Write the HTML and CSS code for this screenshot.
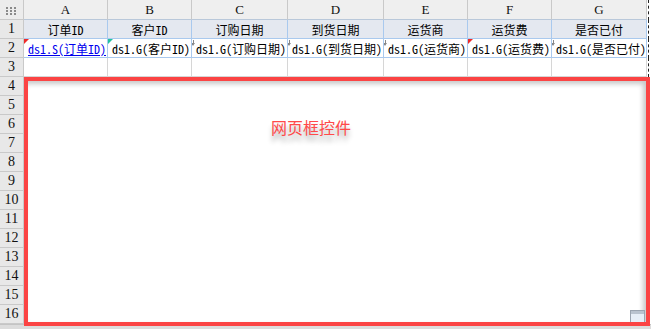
FILE: index.html
```html
<!DOCTYPE html>
<html lang="zh">
<head>
  <meta charset="UTF-8" />
  <title>网页框控件</title>
  <link rel="stylesheet" href="styles.css">
</head>
<body>
  <div class="sheet">
    <!-- 列头 -->
    <div class="corner">
      <svg width="11" height="8" viewBox="0 0 11 8">
        <g fill="#8a8a8a">
          <rect x="0" y="0" width="2" height="2"/><rect x="4" y="0" width="2" height="2"/><rect x="8" y="0" width="2" height="2"/>
          <rect x="0" y="3" width="2" height="2"/><rect x="4" y="3" width="2" height="2"/><rect x="8" y="3" width="2" height="2"/>
          <rect x="0" y="6" width="2" height="2"/><rect x="4" y="6" width="2" height="2"/><rect x="8" y="6" width="2" height="2"/>
        </g>
      </svg>
    </div>
    <div class="col-head">A</div>
    <div class="col-head">B</div>
    <div class="col-head">C</div>
    <div class="col-head">D</div>
    <div class="col-head">E</div>
    <div class="col-head">F</div>
    <div class="col-head">G</div>
    <div class="filler"></div>

    <!-- 第1行 -->
    <div class="row-head">1</div>
    <div class="cell title">订单ID</div>
    <div class="cell title">客户ID</div>
    <div class="cell title">订购日期</div>
    <div class="cell title">到货日期</div>
    <div class="cell title">运货商</div>
    <div class="cell title">运货费</div>
    <div class="cell title">是否已付</div>
    <div class="filler"></div>

    <!-- 第2行 -->
    <div class="row-head">2</div>
    <div class="cell field"><span class="mark red"></span><span class="link">ds1.S(订单ID)</span></div>
    <div class="cell field"><span class="mark green"></span>ds1.G(客户ID)</div>
    <div class="cell field"><span class="arrow"></span>ds1.G(订购日期)</div>
    <div class="cell field"><span class="arrow"></span>ds1.G(到货日期)</div>
    <div class="cell field"><span class="arrow"></span>ds1.G(运货商)</div>
    <div class="cell field"><span class="mark red"></span>ds1.G(运货费)</div>
    <div class="cell field"><span class="arrow"></span>ds1.G(是否已付)</div>
    <div class="filler"></div>

    <!-- 第3行 -->
    <div class="row-head">3</div>
    <div class="cell plain"></div>
    <div class="cell plain"></div>
    <div class="cell plain"></div>
    <div class="cell plain"></div>
    <div class="cell plain"></div>
    <div class="cell plain"></div>
    <div class="cell plain"></div>
    <div class="filler"></div>

    <div class="row-head">4</div>
    <div class="row-head">5</div>
    <div class="row-head">6</div>
    <div class="row-head">7</div>
    <div class="row-head">8</div>
    <div class="row-head">9</div>
    <div class="row-head">10</div>
    <div class="row-head">11</div>
    <div class="row-head">12</div>
    <div class="row-head">13</div>
    <div class="row-head">14</div>
    <div class="row-head">15</div>
    <div class="row-head">16</div>

    <!-- 网页框 -->
    <div class="frame">
      <div class="frame-label">网页框控件</div>
      <div class="frame-icon"></div>
    </div>

    <div class="scrollbar"></div>
  </div>
</body>
</html>
```

FILE: styles.css
```css
:root {
  --head: #ececec;
  --head-line: #c9c9c9;
  --blue-line: #a9c9ee;
  --gray-line: #d6d6d6;
  --title-bg: #e4e8f0;
  --red: #fb4444;
}

body {
  margin: 0;
  background: #fff;
  overflow: hidden;
  font-family: "Noto Sans Mono CJK SC", "Noto Sans CJK SC", monospace;
  font-size: 12px;
  color: #000;
}

.sheet {
  display: grid;
  grid-template-columns: 24px 84px 84px 96px 96px 84px 84px 95px 1fr;
  grid-template-rows: 20px repeat(16, 19px) 20px;
  width: 651px;
  height: 329px;
}

.corner,
.col-head,
.row-head {
  box-sizing: border-box;
  background: var(--head);
  border-right: 1px solid var(--head-line);
  border-bottom: 1px solid var(--head-line);
  display: flex;
  align-items: center;
  justify-content: center;
  font-family: "Liberation Serif", "DejaVu Serif", serif;
  font-size: 13px;
  color: #111;
}

.col-head {
  background: #efefef;
  border-bottom-color: #b9c8da;
}

.row-head {
  grid-column: 1;
  background: #e8e8e8;
  font-size: 14px;
}

.corner svg {
  margin-top: 2px;
}

.filler {
  box-sizing: border-box;
  margin-left: 1px;
  border-left: 1px dashed #222;
}

.cell {
  box-sizing: border-box;
  position: relative;
  border-right: 1px solid var(--blue-line);
  border-bottom: 1px solid var(--blue-line);
  display: flex;
  align-items: center;
  white-space: nowrap;
  overflow: hidden;
}

.title {
  background: var(--title-bg);
  justify-content: center;
}

.field {
  padding-left: 4px;
}

.plain {
  border-right-color: var(--gray-line);
  border-bottom-color: var(--gray-line);
}

.link {
  color: #0000ee;
  text-decoration: underline;
}

.mark {
  position: absolute;
  left: 0;
  top: 0;
  width: 0;
  height: 0;
  border-top: 5px solid;
  border-right: 5px solid transparent;
}

.mark.red {
  border-top-color: #ee2a2a;
}

.mark.green {
  border-top-color: #22c2a0;
}

.arrow {
  position: absolute;
  left: 1px;
  top: 1px;
  width: 1px;
  height: 4px;
  background: #888;
}

.arrow::after {
  content: "";
  position: absolute;
  left: -2px;
  top: 3px;
  border-top: 3px solid #888;
  border-left: 2.5px solid transparent;
  border-right: 2.5px solid transparent;
}

.frame {
  grid-column: 2 / -1;
  grid-row: 5 / 18;
  position: relative;
  box-sizing: border-box;
  width: 626px;
  height: 249px;
  border: 4px solid var(--red);
  background: #fff;
  box-shadow: inset -3px 3px 5px rgba(0, 0, 0, 0.22);
  padding: 37px 0 0 243px;
}

.frame-label {
  font-family: "Noto Sans CJK SC", sans-serif;
  font-size: 16px;
  line-height: 18px;
  color: #ff4a4a;
  text-shadow: 0 6px 5px rgba(0, 0, 0, 0.3);
}

.frame-icon {
  position: absolute;
  right: 1px;
  bottom: 0;
  width: 13px;
  height: 11px;
  border: 1px solid #9aa4b0;
  border-bottom: none;
  background: linear-gradient(#b9c3cf 0, #b9c3cf 3px, #e6eef7 3px);
}

.scrollbar {
  grid-column: 1 / -1;
  grid-row: 18;
  background: #dcdcdc;
  border-top: 1px solid #c4c4c4;
}
```
